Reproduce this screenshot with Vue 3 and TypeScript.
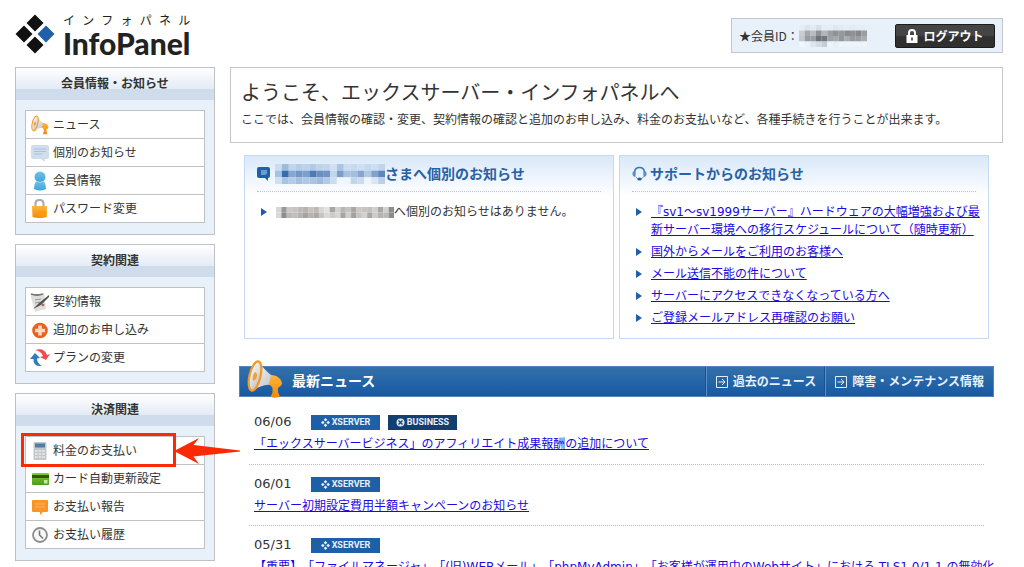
<script setup lang="ts">
interface MenuItem {
  label: string
  icon: string
  marked?: boolean
}
interface MenuGroup {
  title: string
  items: MenuItem[]
}
interface NewsItem {
  date: string
  tags: string[]
  title: string
}

const groups: MenuGroup[] = [
  {
    title: '会員情報・お知らせ',
    items: [
      { label: 'ニュース', icon: 'horn' },
      { label: '個別のお知らせ', icon: 'note' },
      { label: '会員情報', icon: 'person' },
      { label: 'パスワード変更', icon: 'lock' },
    ],
  },
  {
    title: '契約関連',
    items: [
      { label: '契約情報', icon: 'contract' },
      { label: '追加のお申し込み', icon: 'plus' },
      { label: 'プランの変更', icon: 'swap' },
    ],
  },
  {
    title: '決済関連',
    items: [
      { label: '料金のお支払い', icon: 'calc', marked: true },
      { label: 'カード自動更新設定', icon: 'card' },
      { label: 'お支払い報告', icon: 'report' },
      { label: 'お支払い履歴', icon: 'clock' },
    ],
  },
]

const supportLinks: string[] = [
  '『sv1〜sv1999サーバー』ハードウェアの大幅増強および最新サーバー環境への移行スケジュールについて（随時更新）',
  '国外からメールをご利用のお客様へ',
  'メール送信不能の件について',
  'サーバーにアクセスできなくなっている方へ',
  'ご登録メールアドレス再確認のお願い',
]

const newsLinks: string[] = ['過去のニュース', '障害・メンテナンス情報']

const news: NewsItem[] = [
  { date: '06/06', tags: ['XSERVER', 'BUSINESS'], title: '「エックスサーバービジネス」のアフィリエイト成果報酬の追加について' },
  { date: '06/01', tags: ['XSERVER'], title: 'サーバー初期設定費用半額キャンペーンのお知らせ' },
  {
    date: '05/31',
    tags: ['XSERVER'],
    title: '【重要】「ファイルマネージャ」「(旧)WEBメール」「phpMyAdmin」「お客様が運用中のWebサイト」における TLS1.0/1.1 の無効化',
  },
]

// Rows of cell colours for the masked names
const idMask: string[][] = [
  ['#e6eef5', '#dce5ec', '#e3ebf2', '#d8e0e7', '#e6eef5', '#e6eef5', '#e0e8ef', '#e3ebf2', '#e6eef5', '#e3ebf2', '#e6eef5', '#e6eef5'],
  ['#c9cdd3', '#a5a8ac', '#b8bbbf', '#8f9296', '#b3b6ba', '#9b9ea2', '#8e9195', '#95989c', '#888b8f', '#8e9195', '#85888c', '#9a9da1'],
  ['#c2c7cc', '#989ba0', '#9a9da2', '#6f7277', '#74777b', '#a0a3a7', '#a6a9ad', '#92959a', '#a8abaf', '#979a9e', '#9b9ea2', '#a9acb0'],
  ['#f1f7fc', '#e9f2f9', '#dde6ed', '#d4dbe2', '#c3cdd6', '#edf5fb', '#e7eff6', '#edf5fb', '#edf5fb', '#edf5fb', '#edf5fb', '#edf5fb'],
]
const nameMask: string[][] = [
  ['#c9dcf1', '#9fbbdc', '#bfd5ec', '#b4cce7', '#bcd2ea', '#b1cae6', '#bed4eb', '#c1d6ed', '#cfe1f3', '#aac5e2', '#cbdef1', '#c6daef', '#cfe0f2', '#c5d9ee', '#cbdef2', '#bfd5ec'],
  ['#a7c1e0', '#376cae', '#86a6cf', '#7297c6', '#7d9fcb', '#4c7ab6', '#6a90c2', '#6f94c4', '#c2d6ec', '#7c9dc9', '#a9c2df', '#a3bddc', '#86a6ce', '#b0c8e3', '#82a2cd', '#5d87bd'],
  ['#cfe0f3', '#a8c3e1', '#b4cce6', '#a4bfdf', '#aec7e3', '#a9c3e1', '#9ebbdc', '#b3cae6', '#cbddf0', '#f0f6fc', '#eef5fc', '#c1d5eb', '#cbdcf0', '#eef5fc', '#d9e7f5', '#bbcfe8'],
]
const userMask: string[][] = [
  ['#d7d7d7', '#9c9896', '#cac9c8', '#c6c4c3', '#bcbab8', '#b5b2af', '#c4c1bf', '#bbb8b6', '#d8d6d4', '#e2e2e2', '#a8a6a5', '#d4d2d1', '#b8b5b2', '#c6c2bf', '#aaa7a5', '#cbc8c5', '#c7c3c1', '#c2c0be', '#d1cfcd', '#a9a7a5', '#d3d1cf', '#8f8d8b'],
  ['#dad9d8', '#8e8b89', '#bbb9b7', '#c1bfbd', '#b4b2b0', '#a5a2a0', '#b5b2b0', '#aba8a6', '#c7c5c3', '#d9d8d7', '#cdcbc9', '#d8d6d4', '#a6a4a2', '#d0cdcb', '#a3a09e', '#c5c3c1', '#d3d1cf', '#a9a6a4', '#cecbc8', '#b6b4b2', '#bcbab8', '#8f8d8b'],
]
</script>

<template>
  <div class="page">
    <svg class="defs" width="0" height="0" aria-hidden="true">
      <defs>
        <linearGradient id="g-cone" x1="0" y1="0" x2="1" y2="1">
          <stop offset="0" stop-color="#ffffff" />
          <stop offset="1" stop-color="#b9bdc4" />
        </linearGradient>
        <linearGradient id="g-orange" x1="0" y1="0" x2="0" y2="1">
          <stop offset="0" stop-color="#fdb53a" />
          <stop offset="1" stop-color="#f18a08" />
        </linearGradient>
        <linearGradient id="g-sky" x1="0" y1="0" x2="0" y2="1">
          <stop offset="0" stop-color="#6fc3e8" />
          <stop offset="1" stop-color="#3fa5d8" />
        </linearGradient>
        <linearGradient id="g-green" x1="0" y1="0" x2="0" y2="1">
          <stop offset="0" stop-color="#86cc38" />
          <stop offset="1" stop-color="#4c9c18" />
        </linearGradient>
        <symbol id="horn" viewBox="0 0 36 40">
          <path d="M10 3C15 6 20 14 26 17L26 26C20 25 13 27 6 31Z" fill="url(#g-cone)" />
          <path d="M24 16C30 16 35 20 35 25C34 27 32 28 31 29L31 32C31 35 34 37 32 38C28 39 24 39 24 37C26 34 26 30 25 28L22 25Z" fill="url(#g-orange)" />
          <ellipse cx="8" cy="17" rx="5.500" ry="15" transform="rotate(13 8 17)" fill="url(#g-cone)" stroke="#f29a22" stroke-width="2.200" />
          <path d="M8 13C11 14 11 20 6 22C5 19 6 15 8 13Z" fill="#f2a13a" />
        </symbol>
        <symbol id="note" viewBox="0 0 20 20">
          <path d="M3 2H17Q19 2 19 4V14Q19 16 17 16H15V19L11 16H3Q1 16 1 14V4Q1 2 3 2Z" fill="#cfdded" />
          <path d="M4 6H16M4 8.500H16M4 11H12" stroke="#a9c1dc" />
        </symbol>
        <symbol id="person" viewBox="0 0 20 20">
          <path d="M4 18Q4 12 7 10H13Q16 12 16 18Q10 21 4 18Z" fill="url(#g-sky)" />
          <circle cx="10" cy="6" r="5.500" fill="url(#g-sky)" />
          <path d="M6 10Q10 13 14 10" fill="none" stroke="#a5dcf2" />
        </symbol>
        <symbol id="lock" viewBox="0 0 20 20">
          <path d="M5.500 9V5Q5.500 1 9.500 1Q13.500 1 13.500 5V9" fill="none" stroke="#aaaeb1" stroke-width="2.200" />
          <path d="M2 7H17L16.500 18Q9 20 2.500 18Z" fill="url(#g-orange)" />
          <path d="M9 12H17L16.500 18L9 19Z" fill="#ff9900" opacity=".7" />
        </symbol>
        <symbol id="contract" viewBox="0 0 20 20">
          <path d="M1 2Q8 3 14 1L16 17Q10 18 5 20L1 5Z" fill="#dededc" />
          <path d="M1 2Q7 4 13 2" fill="none" stroke="#777" stroke-width="1.800" />
          <path d="M5 8L11 7M5 11L10 10" fill="none" stroke="#999" />
          <path d="M3 17L9 11L19 3L19 5L11 13Z" fill="#535353" />
          <circle cx="13" cy="13" r="1.300" fill="#c75b52" />
        </symbol>
        <symbol id="plus" viewBox="0 0 20 20">
          <circle cx="10" cy="10.500" r="7.800" fill="#e8611d" />
          <path d="M10 5.500V15.500M5 10.500H15" stroke="#ffd9c2" stroke-width="3.600" />
        </symbol>
        <symbol id="swap" viewBox="0 0 20 20">
          <path d="M5 2Q14 -1 17 7L20 6L16 12L10 9L13 8Q11 3 5 2Z" fill="#ef4a4f" />
          <path d="M12 18Q3 19 3.500 11L0 11L5 5L10 10L7 10.500Q7 15 12 18Z" fill="#2f7dbd" />
        </symbol>
        <symbol id="calc" viewBox="0 0 20 20">
          <rect x="3.500" y="1" width="13" height="18" rx="1" fill="#c3c7ca" />
          <rect x="5" y="2.500" width="10" height="4" fill="#4f7da4" />
          <path d="M5 10H15M5 13H15M5 16H15" stroke="#dfe2e4" stroke-width="1.800" stroke-dasharray="2.600 1" />
        </symbol>
        <symbol id="card" viewBox="0 0 20 20">
          <rect x="2" y="4" width="17" height="12" rx="1" fill="url(#g-green)" />
          <rect x="2" y="6" width="17" height="3" fill="#2c5a12" />
          <rect x="14" y="11" width="3.500" height="3.500" fill="#c5eb9a" />
        </symbol>
        <symbol id="report" viewBox="0 0 20 20">
          <path d="M3 3H17Q18 3 18 4V14Q18 15 17 15H13L10 18V15H3Q2 15 2 14V4Q2 3 3 3Z" fill="#f99427" />
          <path d="M5 7H15M5 10H15" stroke="#fbb468" />
        </symbol>
        <symbol id="clock" viewBox="0 0 20 20">
          <circle cx="10" cy="10" r="7" fill="#f8f8f8" stroke="#8d8d8d" stroke-width="1.800" />
          <path d="M9.500 5.500V10L13 13.500" fill="none" stroke="#777" stroke-width="1.600" />
        </symbol>
      </defs>
    </svg>

    <header class="header">
      <a class="logo" href="#" aria-label="InfoPanel">
        <svg class="logo-mark" viewBox="0 0 40 40" aria-hidden="true">
          <path d="M20 .500L28.500 9L20 17.500L11.500 9ZM9 11.500L17.500 20L9 28.500L.500 20ZM20 22.500L28.500 31L20 39.500L11.500 31Z" fill="#111" />
          <path d="M31 11.500L39.500 20L31 28.500L22.500 20Z" fill="#1f60a8" />
        </svg>
        <span class="logo-text">
          <span class="logo-kana">インフォパネル</span>
          <span class="logo-name">InfoPanel</span>
        </span>
      </a>
      <div class="account">
        <span class="member">★会員ID：</span>
        <svg class="id-mask" viewBox="0 0 72 24" preserveAspectRatio="none" aria-hidden="true">
          <g v-for="(row, r) in idMask" :key="r">
            <rect v-for="(c, i) in row" :key="i" :x="i * 6" :y="r * 6" width="6" height="6" :fill="c" />
          </g>
        </svg>
        <button class="logout" type="button">
          <svg viewBox="0 0 12 14" aria-hidden="true">
            <path d="M3 7V4Q3 1 6 1Q9 1 9 4V7" fill="none" stroke="#fff" stroke-width="2" />
            <rect x=".500" y="6" width="11" height="8" fill="#fff" />
            <path d="M6 8.500V11.500" stroke="#333" stroke-width="1.500" />
          </svg>
          <span>ログアウト</span>
        </button>
      </div>
    </header>

    <div class="columns">
      <nav class="sidebar">
        <section v-for="g in groups" :key="g.title" class="group">
          <h2 class="group-title">{{ g.title }}</h2>
          <ul class="menu">
            <li v-for="item in g.items" :key="item.label" class="menu-item">
              <a href="#">
                <svg class="menu-icon" aria-hidden="true"><use :href="'#' + item.icon" /></svg>
                <span>{{ item.label }}</span>
              </a>
              <div v-if="item.marked" class="marker">
                <svg class="arrow" viewBox="0 0 66 26" aria-hidden="true">
                  <path d="M0 13L25 0L19.500 7L66 12.500V13.500L19.500 18.500L25 26Z" fill="#fb2a05" />
                </svg>
              </div>
            </li>
          </ul>
        </section>
      </nav>

      <main class="main">
        <section class="welcome">
          <h1>ようこそ、エックスサーバー・インフォパネルへ</h1>
          <p>ここでは、会員情報の確認・変更、契約情報の確認と追加のお申し込み、料金のお支払いなど、各種手続きを行うことが出来ます。</p>
        </section>

        <div class="panels">
          <section class="panel">
            <h2 class="panel-title">
              <svg class="bubble" viewBox="0 0 14 14" aria-hidden="true">
                <path d="M2 0H11Q13 0 13 2V9Q13 11 11 11V14L8 11H2Q0 11 0 9V2Q0 0 2 0Z" fill="#1f5fa6" />
                <path d="M4 3H10V7L8 8H4Z" fill="#6c9acb" />
              </svg>
              <svg class="name-mask" viewBox="0 0 112 21" preserveAspectRatio="none" aria-hidden="true">
                <g v-for="(row, r) in nameMask" :key="r">
                  <rect v-for="(c, i) in row" :key="i" :x="i * 7" :y="r * 7" width="7" height="7" :fill="c" />
                </g>
              </svg>
              <span>さまへ個別のお知らせ</span>
            </h2>
            <ul class="panel-list">
              <li>
                <span class="masked-line">
                  <svg class="user-mask" viewBox="0 0 110 10" preserveAspectRatio="none" aria-hidden="true">
                    <g v-for="(row, r) in userMask" :key="r">
                      <rect v-for="(c, i) in row" :key="i" :x="i * 5" :y="r * 5" width="5" height="5" :fill="c" />
                    </g>
                  </svg>
                  <span>へ個別のお知らせはありません。</span>
                </span>
              </li>
            </ul>
          </section>

          <section class="panel">
            <h2 class="panel-title">
              <svg class="headset" viewBox="0 0 15 15" aria-hidden="true">
                <path d="M2.500 9V6Q3 1.500 7.500 1.500Q12 1.500 12.500 6V9" fill="none" stroke="#3a74b1" stroke-width="1.500" />
                <path d="M3.500 5Q0 5 .500 8Q.500 10.500 3.500 11ZM11.500 5Q15 5 14.500 8Q14.500 10.500 11.500 11Z" fill="#5c8dc0" />
                <path d="M4 11Q5 13 7.500 13Q10 13 11.500 11" fill="none" stroke="#6b98c6" />
                <ellipse cx="7.500" cy="13" rx="2.200" ry="1.600" fill="#1f5fa6" />
              </svg>
              <span>サポートからのお知らせ</span>
            </h2>
            <ul class="panel-list">
              <li v-for="l in supportLinks" :key="l"><a href="#">{{ l }}</a></li>
            </ul>
          </section>
        </div>

        <section class="news">
          <div class="news-bar">
            <svg class="news-horn" aria-hidden="true"><use href="#horn" /></svg>
            <h2>最新ニュース</h2>
            <a v-for="n in newsLinks" :key="n" class="news-nav" href="#">
              <svg viewBox="0 0 12 12" aria-hidden="true">
                <path d="M.500 .500H11.500V11.500H.500ZM2.500 6H9M6 3L9 6L6 9" fill="none" stroke="#e4eef8" />
              </svg>
              <span>{{ n }}</span>
            </a>
          </div>
          <ul class="news-list">
            <li v-for="n in news" :key="n.date">
              <div class="news-meta">
                <time>{{ n.date }}</time>
                <span v-for="t in n.tags" :key="t" class="tag" :class="{ business: t === 'BUSINESS' }">
                  <svg v-if="t === 'XSERVER'" viewBox="0 0 9 9" aria-hidden="true">
                    <path d="M4.500 0L6.300 1.800L4.500 3.600L2.700 1.800ZM1.800 2.700L3.600 4.500L1.800 6.300L0 4.500ZM7.200 2.700L9 4.500L7.200 6.300L5.400 4.500ZM4.500 5.400L6.300 7.200L4.500 9L2.700 7.200Z" fill="#e6f0fa" />
                  </svg>
                  <svg v-else viewBox="0 0 9 9" aria-hidden="true">
                    <circle cx="4.500" cy="4.500" r="4" fill="#dbe6f2" />
                    <path d="M2.500 2.500L6.500 6.500M6.500 2.500L2.500 6.500" stroke="#143d70" stroke-width="1.300" />
                  </svg>
                  <span>{{ t }}</span>
                </span>
              </div>
              <a class="news-link" href="#">{{ n.title }}</a>
            </li>
          </ul>
        </section>
      </main>
    </div>
  </div>
</template>

<style>
html,
body {
  margin: 0;
  background: #fff;
}
</style>

<style scoped>
.page {
  padding: 0 21px 0 15px;
  color: #333;
  font-family: "DejaVu Sans", "Noto Sans CJK JP", sans-serif;
  font-size: 12px;
  line-height: 18px;
  text-spacing-trim: space-all;
}
.defs {
  position: absolute;
}
h1,
h2,
p,
ul {
  margin: 0;
  padding: 0;
}
ul {
  list-style: none;
}
a {
  color: #1c08e4;
}
svg {
  flex: none;
}

.header {
  display: flex;
  justify-content: space-between;
  align-items: flex-start;
  height: 67px;
}
.logo {
  display: flex;
  gap: 8px;
  padding-top: 14px;
  color: #222;
  text-decoration: none;
}
.logo-mark {
  width: 40px;
  height: 40px;
}
.logo-text {
  display: flex;
  flex-direction: column;
}
.logo-kana {
  height: 14px;
  font-size: 12px;
  line-height: 14px;
  text-align: justify;
  text-align-last: justify;
}
.logo-name {
  font-family: Lato, "Open Sans", sans-serif;
  font-size: 30px;
  line-height: 30px;
  font-weight: 900;
}
.account {
  display: flex;
  align-items: center;
  box-sizing: border-box;
  width: 272px;
  height: 35px;
  margin-top: 18px;
  padding: 0 7px;
  border: 1px solid #c3c6ca;
  background: #e8f1fa;
}
.member {
  white-space: nowrap;
  font-family: "Noto Sans CJK JP", sans-serif;
}
.id-mask {
  width: 68px;
  height: 22px;
}
.logout {
  display: flex;
  align-items: center;
  justify-content: center;
  gap: 5px;
  width: 100px;
  height: 24px;
  margin-left: auto;
  padding: 0;
  border: 1px solid #1c1c1c;
  border-radius: 2px;
  background: linear-gradient(#454545 0 45%, #303030 55%);
  color: #fff;
  font-family: "Noto Sans CJK JP", sans-serif;
  font-size: 12px;
  font-weight: 700;
}
.logout svg {
  width: 12px;
  height: 14px;
}

.columns {
  display: grid;
  grid-template-columns: 200px minmax(0, 1fr);
  gap: 15px;
}
.sidebar {
  display: flex;
  flex-direction: column;
  gap: 9px;
}
.group {
  padding-bottom: 11px;
  border: 1px solid #bfc2c5;
  background: #e8f1fa;
}
.group-title {
  height: 32px;
  margin-bottom: 10px;
  background: linear-gradient(#fff, #e3ebf5 66%, #cfdcec 67%, #cfdcec);
  font-size: 12px;
  line-height: 32px;
  text-align: center;
}
.menu {
  margin: 0 9px;
  border: 1px solid #bfc2c5;
  background: #fff;
}
.menu-item {
  position: relative;
}
.menu-item + .menu-item {
  border-top: 1px solid #bfc2c5;
}
.menu-item a {
  display: flex;
  align-items: center;
  gap: 3px;
  height: 27px;
  padding-left: 4px;
  color: #333;
  text-decoration: none;
}
.menu-icon {
  width: 20px;
  height: 20px;
}
.marker {
  position: absolute;
  z-index: 1;
  top: -4px;
  left: -5px;
  box-sizing: border-box;
  width: 155px;
  height: 34px;
  border: 3px solid #fb2a05;
}
.arrow {
  position: absolute;
  top: 2px;
  left: 150px;
  width: 66px;
  height: 26px;
}

.welcome {
  min-height: 76px;
  box-sizing: border-box;
  padding: 10px;
  border: 1px solid #c6c6c6;
}
.welcome h1 {
  font-size: 20px;
  line-height: 30px;
  font-weight: 400;
}
.welcome p {
  line-height: 24px;
}
.panels {
  display: grid;
  grid-template-columns: 1fr 1fr;
  gap: 5px;
  margin: 12px 14px 0;
}
.panel {
  min-height: 182px;
  border: 1px solid #c5d9f0;
  background: linear-gradient(#d9e8fa, #fff 40px);
}
.panel-title {
  display: flex;
  align-items: center;
  height: 35px;
  margin: 0 12px;
  border-bottom: 1px dotted #bcc4cc;
  color: #2761a6;
  font-size: 14px;
}
.bubble {
  width: 14px;
  height: 14px;
  margin-right: 4px;
}
.name-mask {
  width: 110px;
  height: 20px;
}
.headset {
  width: 15px;
  height: 15px;
  margin-right: 3px;
}
.panel-list {
  display: grid;
  gap: 4px;
  padding: 11px 0 0 16px;
}
.panel-list li {
  display: flex;
  gap: 9px;
}
.panel-list li::before {
  flex: none;
  width: 6px;
  height: 8px;
  margin-top: 5px;
  background: #1f5fa6;
  clip-path: polygon(0 0, 100% 50%, 0 100%);
  content: "";
}
.masked-line {
  display: flex;
  align-items: center;
}
.user-mask {
  width: 118px;
  height: 11px;
}

.news {
  margin: 27px 9px 0;
}
.news-bar {
  display: flex;
  box-sizing: border-box;
  height: 31px;
  padding-left: 7px;
  border: 1px solid #5585b9;
  background: linear-gradient(#3370ab, #175aa4);
  color: #fff;
}
.news-horn {
  width: 36px;
  height: 40px;
  margin: -8px 9px 0 0;
}
.news-bar h2 {
  flex: 1;
  font-size: 14px;
  line-height: 28px;
}
.news-nav {
  display: flex;
  align-items: center;
  gap: 5px;
  padding: 0 9px;
  border-left: 1px solid #5d8fc2;
  box-shadow: -1px 0 #1c4f8c;
  color: #e9f1fa;
  font-weight: 700;
  text-decoration: none;
}
.news-nav svg {
  width: 12px;
  height: 12px;
}
.news-list {
  margin: 0 10px;
}
.news-list li {
  height: 61px;
  box-sizing: border-box;
  padding: 9px 0 0 5px;
  border-bottom: 1px dotted #bbb;
}
.news-list li:first-child {
  height: 68px;
  padding-top: 15px;
}
.news-meta {
  display: flex;
  align-items: center;
  gap: 8px;
  height: 20px;
}
.news-meta time {
  width: 49px;
  font-size: 13px;
}
.news-link {
  display: block;
  line-height: 24px;
  white-space: nowrap;
}
.tag {
  display: flex;
  align-items: center;
  justify-content: center;
  gap: 2px;
  width: 69px;
  height: 15px;
  background: #1e60a7;
  color: #e6f0fa;
  font-family: Roboto, sans-serif;
  font-size: 9px;
  line-height: 15px;
  font-weight: 700;
}
.tag.business {
  background: #143d70;
}
.tag svg {
  width: 9px;
  height: 9px;
}
</style>
